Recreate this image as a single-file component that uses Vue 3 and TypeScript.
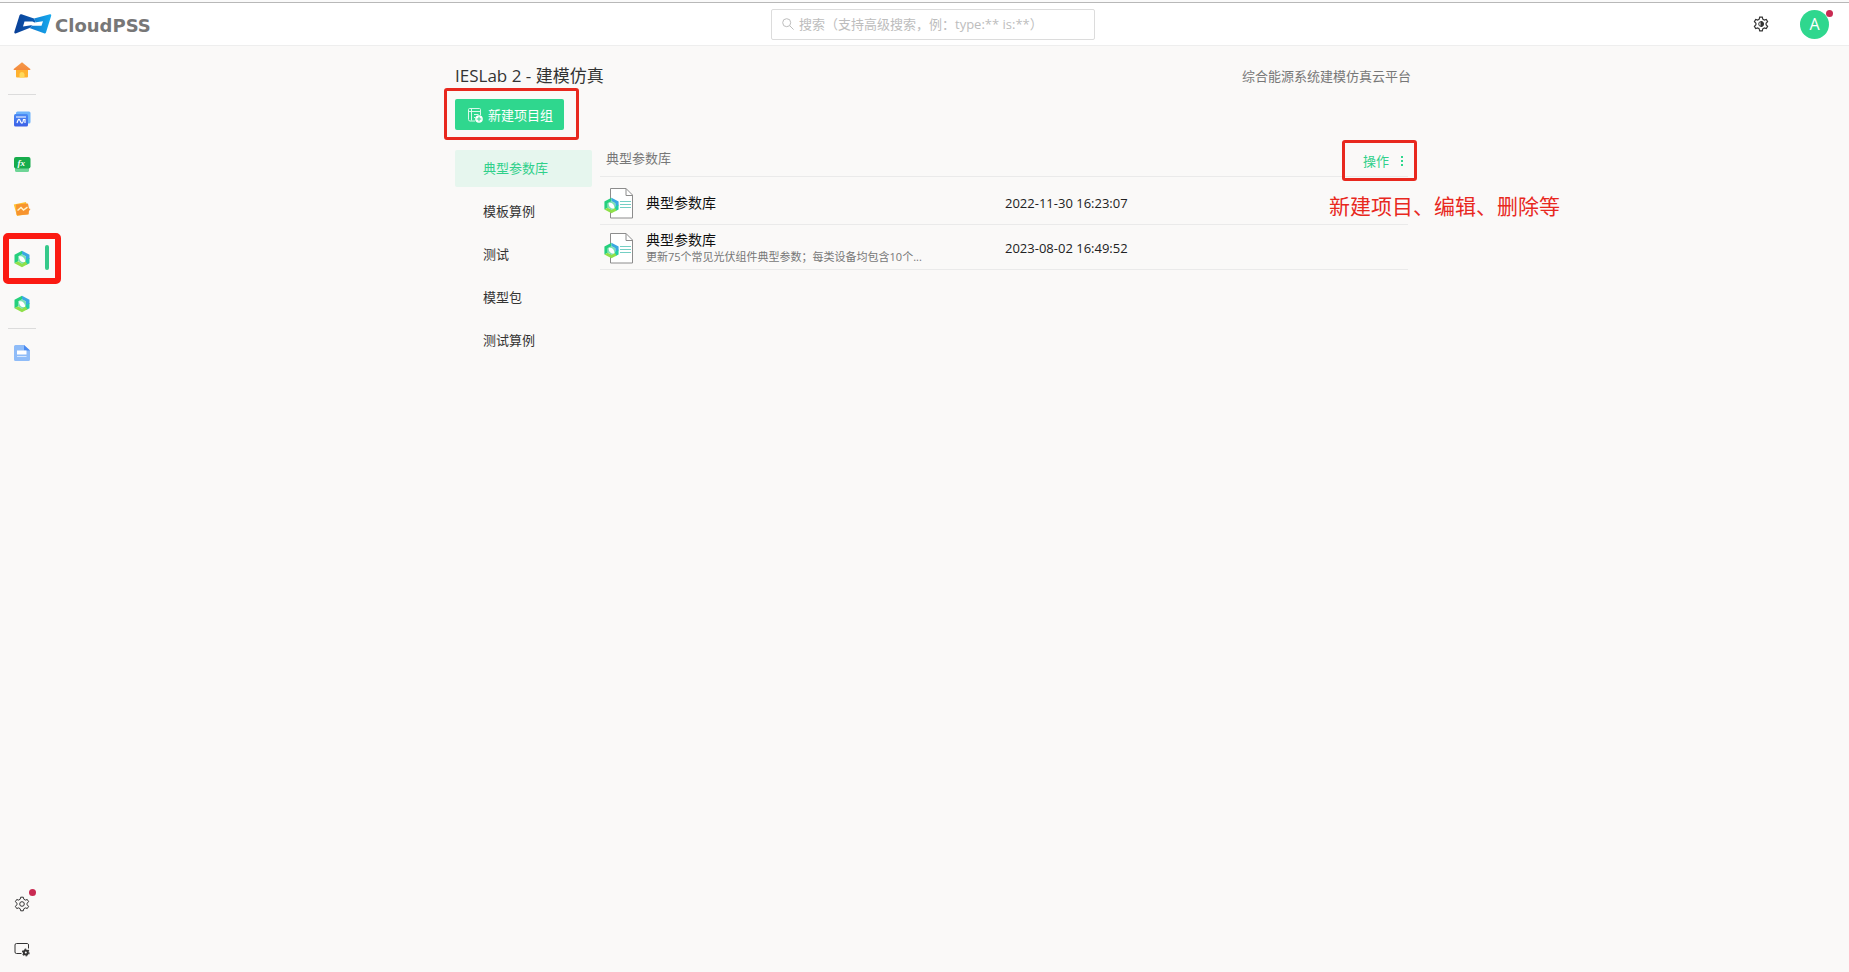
<script setup lang="ts">
import { ref } from 'vue'

interface Project {
  name: string
  note?: string
  time: string
}

const keyword = ref('')
const active = ref(0)
const groups: string[] = ['典型参数库', '模板算例', '测试', '模型包', '测试算例']
const projects: Project[] = [
  { name: '典型参数库', time: '2022-11-30 16:23:07' },
  { name: '典型参数库', note: '更新75个常见光伏组件典型参数；每类设备均包含10个...', time: '2023-08-02 16:49:52' },
]
const gear =
  'M6.7 1.2h2.6l.5 2 1.5.9 2-.6 1.3 2.2-1.5 1.5v1.6l1.5 1.5-1.3 2.2-2-.6-1.5.9-.5 2H6.7l-.5-2-1.5-.9-2 .6-1.3-2.2 1.5-1.5V7.200l-1.500-1.500 1.300-2.200 2 .6 1.500-.900z'
</script>

<template>
  <div class="page">
    <svg class="defs" width="0" height="0" aria-hidden="true">
      <defs>
        <linearGradient id="homeRoof" x1="0" y1="0" x2="0" y2="1">
          <stop offset="0" stop-color="#f59a4a" /><stop offset="1" stop-color="#f48a3c" />
        </linearGradient>
        <linearGradient id="cardBlue" x1="0" y1="0" x2="0" y2="1">
          <stop offset="0" stop-color="#4b8cf5" /><stop offset="1" stop-color="#3c5fe6" />
        </linearGradient>
        <linearGradient id="markDark" x1="0" y1="0" x2="1" y2="0">
          <stop offset="0" stop-color="#0a3f96" /><stop offset="1" stop-color="#0b5cb4" />
        </linearGradient>
        <linearGradient id="markLight" x1="0" y1="0" x2="1" y2="0">
          <stop offset="0" stop-color="#1277cc" /><stop offset="1" stop-color="#14a9ee" />
        </linearGradient>
        <symbol id="hexLogo" viewBox="0 0 18 18">
          <path d="M9 .8 1.500 4.800v8.400L5 11.500V6.500L9 4.500z" fill="#25d07c" />
          <path d="M9 .8l7.500 4V9L13 10.500V6.500L9 4.500z" fill="#3aa8e2" />
          <path d="M16.500 8v5.200L13 15l-1.500-3.500L13 10z" fill="#22cfa2" />
          <path d="M1.500 13.200 9 17.200l5.500-3L12.300 11 9 13.500l-4-2.200z" fill="#8fe04a" />
          <path d="M5 6.500 9 4.300l4 2.200v4.600L9 13.700l-4-2.600z" fill="#7be0b4" />
          <path d="M6 6.300c3-.7 6 1 6.200 5.500C8.500 13 6 10.500 6 6.300z" fill="#fff" />
        </symbol>
      </defs>
    </svg>

    <header class="topbar">
      <a class="brand" href="#" aria-label="CloudPSS">
        <svg width="38" height="20" viewBox="0 0 38 20" aria-hidden="true">
          <path d="M7.500.3 20 4.500 22 9l-6.500 5L1.600 19.400Q0 19.800.3 18L5.500 1.500Q6 0 7.500.3z" fill="url(#markDark)" />
          <path d="M36 .3Q37.600 0 37.200 1.800L32 18.500q-.5 1.300-2 .7L15.500 14 22 9l-2-4.500z" fill="url(#markLight)" />
          <path d="M10.500 7.500h8L20.500 8.500 29 7.200l-1.500 4.600H19l-2-.6-8 1.200z" fill="#fff" />
        </svg>
        <span class="wordmark">CloudPSS</span>
      </a>
      <label class="search">
        <svg width="12" height="12" viewBox="0 0 12 12" aria-hidden="true">
          <circle cx="4.700" cy="4.700" r="4" fill="none" stroke="#bdbdbd" />
          <path d="M7.600 7.600l4 4" stroke="#bdbdbd" />
        </svg>
        <input v-model="keyword" type="text" aria-label="搜索" placeholder="搜索（支持高级搜索，例：type:** is:**）" />
      </label>
      <div class="tools">
        <button class="plain" type="button" aria-label="设置">
          <svg width="16" height="16" viewBox="0 0 16 16" fill="none" stroke="#333">
            <path :d="gear" stroke-width="1.200" />
            <circle cx="8" cy="8" r="2.300" />
            <path d="M8 5.500a2.500 2.500 0 0 1 0 5z" fill="#333" />
          </svg>
        </button>
        <button class="avatar" type="button" aria-label="账户">A<i class="dot"></i></button>
      </div>
    </header>

    <div class="body">
      <nav class="rail" aria-label="应用">
        <a href="#" aria-label="首页">
          <svg width="18" height="18" viewBox="0 0 18 18">
            <path d="M3 8h12v7.500a1 1 0 0 1-1 1H4a1 1 0 0 1-1-1z" fill="#ffb12e" />
            <path d="M6.500 16.500v-3a2.500 2.500 0 0 1 5 0v3z" fill="#ffd95a" />
            <path d="M9 1.200 17.300 8a.6.6 0 0 1-.4 1H1.100a.6.6 0 0 1-.4-1z" fill="url(#homeRoof)" />
          </svg>
        </a>
        <hr />
        <a href="#" aria-label="电磁仿真">
          <svg width="18" height="18" viewBox="0 0 18 18">
            <rect x="3" y="1.500" width="14.500" height="12" rx="1.500" fill="#6fb4fb" />
            <rect x="1" y="4" width="14" height="12.500" rx="1.500" fill="url(#cardBlue)" />
            <path d="M3 7h10M4 13c1.500-5 2.500-4 3.500-1.500S10 13.500 10.500 9.500h1.500v3.500" fill="none" stroke="#fff" stroke-width="1.200" />
          </svg>
        </a>
        <a href="#" aria-label="函数">
          <svg width="18" height="18" viewBox="0 0 18 18">
            <rect x="2" y="9" width="14" height="8" rx="1.500" fill="#6ed596" />
            <rect x="1" y="2" width="16.500" height="11.500" rx="2" fill="#17ac4c" />
            <text x="4.500" y="11" class="fx">fx</text>
          </svg>
        </a>
        <a href="#" aria-label="应用工坊">
          <svg width="18" height="18" viewBox="0 0 18 18">
            <path d="M.8 4.500 13 2l2.500 12L4 16z" fill="#ffc22e" />
            <path d="M3 4.500 14 3.500a1 1 0 0 1 1.200 1l.8 4 1.500.5-1.500 2-.5 3.500-11 .8a1 1 0 0 1-1-1z" fill="#f7942f" />
            <path d="M4.500 10.500 8 7.500l2.500 2.500 4-2.800" fill="none" stroke="#fff3c8" stroke-width="1.500" />
          </svg>
        </a>
        <a class="current" href="#" aria-label="建模仿真" aria-current="page">
          <svg width="18" height="18"><use href="#hexLogo" /></svg>
        </a>
        <a href="#" aria-label="台站规划">
          <svg width="18" height="18"><use href="#hexLogo" /></svg>
        </a>
        <hr />
        <a href="#" aria-label="文档">
          <svg width="18" height="18" viewBox="0 0 18 18">
            <path d="M2.500 1H11l6 5.500V15.500A1.500 1.500 0 0 1 15.500 17h-13A1.500 1.500 0 0 1 1 15.500v-13A1.500 1.500 0 0 1 2.500 1z" fill="#8fbcf8" />
            <path d="M11 1l6 5.500h-6z" fill="#4a8af0" />
            <path d="M4 6.500h9.500v4H4z" fill="#fff" />
            <path d="M4 12.500h9.500" stroke="#d5e6fd" stroke-width="1" />
          </svg>
        </a>
        <button class="plain push" type="button" aria-label="设置">
          <svg width="16" height="16" viewBox="0 0 16 16" fill="none" stroke="#333">
            <path :d="gear" />
            <circle cx="8" cy="8" r="2.300" />
          </svg>
          <i class="dot"></i>
        </button>
        <button class="plain" type="button" aria-label="显示设置">
          <svg width="16" height="16" viewBox="0 0 16 16" fill="none" stroke="#333">
            <path d="M7.500 12.500H2.500a1.500 1.500 0 0 1-1.500-1.500V4a1.500 1.500 0 0 1 1.500-1.500h11A1.500 1.500 0 0 1 14.500 4v3.500" />
            <circle cx="11.800" cy="11.500" r="2" stroke-width="2" />
            <circle cx="11.800" cy="11.500" r="3.300" stroke-width="1.200" stroke-dasharray="1.700 1.750" />
          </svg>
        </button>
      </nav>

      <main class="main">
        <div class="content">
          <div class="heading">
            <h1>IESLab 2 - 建模仿真</h1>
            <p>综合能源系统建模仿真云平台</p>
          </div>
          <button class="create marked" type="button">
            <svg width="16" height="16" viewBox="0 0 16 16" fill="none" stroke="#d9f8e9">
              <path d="M8 14H3a1.500 1.500 0 0 1-1.500-1.500v-10A1 1 0 0 1 2.500 1.500h10a1 1 0 0 1 1 1V8M1.500 4.500h12M4.500 1.500v12M7 7.500h4.500M7 10.500h1.500" />
              <circle cx="12" cy="12" r="3.800" fill="#fff" stroke="none" />
              <path d="M12 9.700v4.600M9.700 12h4.600" stroke="#2fd78e" />
            </svg>
            <span>新建项目组</span>
          </button>

          <div class="columns">
            <nav class="groups" aria-label="项目组">
              <a
                v-for="(group, i) in groups"
                :key="group"
                href="#"
                :class="{ selected: i === active }"
                @click.prevent="active = i"
              >{{ group }}</a>
            </nav>

            <div class="listing">
              <table>
                <colgroup>
                  <col class="c-icon" /><col class="c-name" /><col /><col class="c-action" />
                </colgroup>
                <thead>
                  <tr>
                    <th colspan="3">典型参数库</th>
                    <th class="action">
                      <button class="operate marked" type="button">
                        <span>操作</span>
                        <svg width="3" height="12" viewBox="0 0 3 12" fill="#2fd78e" aria-hidden="true">
                          <path d="M0 1h2v2H0zM0 5h2v2H0zM0 9h2v2H0z" />
                        </svg>
                      </button>
                    </th>
                  </tr>
                </thead>
                <tbody>
                  <tr v-for="(p, i) in projects" :key="i">
                    <td class="file">
                      <svg width="30" height="31" viewBox="0 0 30 31" aria-hidden="true">
                        <path d="M6.500.5H22l6.500 6.500v23h-22z" fill="#fff" stroke="#8c8c8c" />
                        <path d="M22 .5V7.500h6.500" fill="none" stroke="#8c8c8c" />
                        <path d="M16 13.500h11M16 16.500h11M16 19.500h11" stroke="#74cfc4" />
                        <use href="#hexLogo" x="-1" y="9" width="17" height="17" />
                      </svg>
                    </td>
                    <td>
                      <a href="#" class="name">{{ p.name }}</a>
                      <div v-if="p.note" class="note">{{ p.note }}</div>
                    </td>
                    <td colspan="2" class="time">{{ p.time }}</td>
                  </tr>
                </tbody>
              </table>
              <p class="remark">新建项目、编辑、删除等</p>
            </div>
          </div>
        </div>
      </main>
    </div>
  </div>
</template>

<style>
body {
  margin: 0;
  background: #faf9f8;
}
</style>

<style scoped>
.page {
  display: flex;
  flex-direction: column;
  min-height: 100vh;
  box-sizing: border-box;
  border-top: 2px solid #fafafa;
  background: #faf9f8;
  color: #333;
  font: 13px/18px 'Open Sans', 'Noto Sans CJK SC', sans-serif;
}
.defs {
  position: absolute;
}
.page a {
  color: inherit;
  text-decoration: none;
}
.page button {
  font: inherit;
  cursor: pointer;
}
.page svg {
  display: block;
  flex: none;
}
.topbar {
  display: grid;
  grid-template-columns: 17px 1fr 324px 1fr;
  align-items: center;
  height: 42px;
  border-top: 1px solid #b8b8b8;
  border-bottom: 1px solid #eee;
  background: #fff;
}
.brand {
  grid-column: 1 / 3;
  display: flex;
  align-items: center;
  gap: 3px;
  padding-left: 14px;
}
.page .wordmark {
  padding-top: 4px;
  color: #777;
  font: bold 18px/20px 'DejaVu Sans', sans-serif;
}
.search {
  display: flex;
  align-items: center;
  gap: 5px;
  box-sizing: border-box;
  height: 31px;
  padding: 0 10px;
  border: 1px solid #dcdcdc;
  border-radius: 2px;
  background: #fff;
}
.search input {
  flex: 1;
  min-width: 0;
  padding: 0;
  border: 0;
  outline: 0;
  background: none;
  color: #333;
  font: inherit;
}
.search input::placeholder {
  color: #bdbdbd;
  opacity: 1;
}
.tools {
  display: flex;
  align-items: center;
  justify-content: flex-end;
  gap: 31px;
  padding-right: 20px;
}
.plain {
  position: relative;
  display: flex;
  align-items: center;
  justify-content: center;
  padding: 0;
  border: 0;
  background: none;
}
.avatar {
  position: relative;
  width: 29px;
  height: 29px;
  padding: 0;
  border: 0;
  border-radius: 50%;
  background: #2fd78e;
  color: #fff;
}
.page .avatar {
  font-size: 16px;
}
.dot {
  position: absolute;
  width: 7px;
  height: 7px;
  border-radius: 50%;
  background: #c92a52;
}
.avatar .dot {
  top: 0;
  right: -4px;
}
.tools .plain {
  width: 16px;
  height: 30px;
}
.body {
  display: flex;
  flex: 1;
}
.rail {
  display: flex;
  flex-direction: column;
  width: 51px;
  padding: 1px 0;
}
.rail a,
.rail .plain {
  display: flex;
  align-items: center;
  justify-content: center;
  width: 44px;
  height: 45px;
}
.rail hr {
  width: 28px;
  margin: 2px 0 1px 8px;
  border: 0;
  border-top: 1px solid #dcdcdc;
}
.rail .push {
  margin-top: auto;
}
.rail .dot {
  top: 8px;
  left: 29px;
}
.rail .current {
  position: relative;
  margin-top: 5px;
}
.rail .current::before {
  content: '';
  position: absolute;
  top: 9px;
  left: 45px;
  width: 4px;
  height: 25px;
  border-radius: 2px;
  background: #35c98a;
}
.rail .current::after {
  content: '';
  position: absolute;
  top: -3px;
  left: 3px;
  width: 46px;
  height: 39px;
  border: 6px solid #fb1a12;
  border-radius: 5px;
}
.fx {
  fill: #fff;
  font: italic bold 9px 'Liberation Serif', serif;
}
.main {
  flex: 1;
  padding: 18px 34px 0 0;
}
.content {
  max-width: 956px;
  margin: 0 auto;
}
.heading {
  display: flex;
  align-items: center;
  justify-content: space-between;
  height: 24px;
}
.heading h1 {
  margin: 0;
  font-size: 17px;
  line-height: 24px;
  font-weight: 400;
}
.heading p {
  margin: 0;
  color: #777;
}
.marked {
  position: relative;
}
.marked::after {
  content: '';
  position: absolute;
  border: 3px solid #e8281e;
  border-radius: 3px;
}
.create {
  display: flex;
  align-items: center;
  gap: 5px;
  height: 31px;
  margin-top: 11px;
  padding: 0 11px 0 12px;
  border: 0;
  border-radius: 2px;
  background: #2fd78e;
  color: #fff;
}
.create::after {
  inset: -11px -15px -10px -11px;
}
.columns {
  display: flex;
  align-items: flex-start;
  gap: 8px;
  margin-top: 17px;
}
.groups {
  display: flex;
  flex-direction: column;
  gap: 6px;
  width: 137px;
  padding-top: 3px;
}
.groups a {
  padding-left: 28px;
  border-radius: 2px;
  line-height: 37px;
}
.groups a.selected {
  background: #e6f6ee;
  color: #2fd08a;
}
.listing {
  position: relative;
  flex: 1;
  padding-right: 3px;
}
table {
  width: 100%;
  table-layout: fixed;
  border-collapse: separate;
  border-spacing: 0;
}
.c-icon {
  width: 46px;
}
.c-name {
  width: 359px;
}
.c-action {
  width: 60px;
}
th,
td {
  padding: 0;
  border-bottom: 1px solid #eaeaea;
  text-align: left;
  font-weight: 400;
}
th {
  height: 29px;
  padding-left: 6px;
  color: #777;
  line-height: 22px;
  vertical-align: top;
}
th.action {
  height: 26px;
  padding: 3px 0 0;
}
.operate {
  display: flex;
  align-items: center;
  gap: 12px;
  height: 22px;
  margin-left: auto;
  padding: 0 4px 0 0;
  border: 0;
  background: none;
  color: #2fd08a;
}
.operate::after {
  inset: -10px -9px -9px -21px;
}
td {
  height: 42px;
  padding-top: 2px;
}
tbody tr:first-child td {
  padding-top: 5px;
}
.file {
  padding-left: 4px;
}
.name {
  display: block;
  font-size: 14px;
}
.page .name {
  color: #111;
}
.note {
  overflow: hidden;
  color: #777;
  font-size: 11px;
  line-height: 16px;
  white-space: nowrap;
}
.time {
  color: #222;
}
.remark {
  position: absolute;
  top: 45px;
  right: -149px;
  margin: 0;
  color: #e8281e;
  font-size: 21px;
  line-height: 28px;
  white-space: nowrap;
}
</style>
